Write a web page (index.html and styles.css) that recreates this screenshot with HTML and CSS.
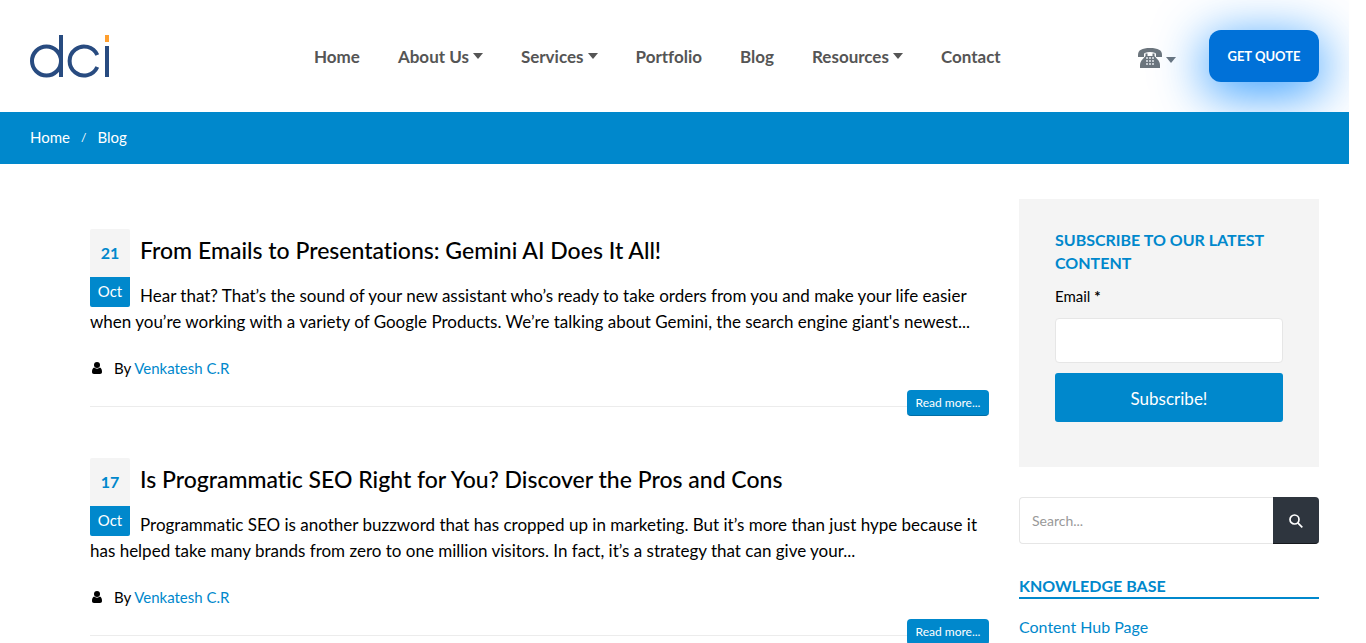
FILE: index.html
```html
<!DOCTYPE html>
<html lang="en">
<head>
<meta charset="utf-8">
<title>Blog</title>
<link rel="stylesheet" href="styles.css">
</head>
<body>
<div class="page">
  <header class="header">
    <a class="logo" href="#" aria-label="dci home">
      <svg width="80" height="44" viewBox="0 0 80 44" fill="none" stroke="#284b80" stroke-width="4">
        <circle cx="16.500" cy="26" r="14.500"/>
        <path d="M31 0v42"/>
        <path d="M67.300 20A14.500 14.500 0 1 0 67.300 32"/>
        <path d="M77 11v31"/>
        <path d="M77 0v7" stroke="#ff9f2e"/>
      </svg>
    </a>
    <nav class="nav">
      <a href="#">Home</a>
      <a href="#">About Us <i class="caret"></i></a>
      <a href="#">Services <i class="caret"></i></a>
      <a href="#">Portfolio</a>
      <a href="#">Blog</a>
      <a href="#">Resources <i class="caret"></i></a>
      <a href="#">Contact</a>
    </nav>
    <div class="actions">
      <button class="phone" aria-label="Phone numbers">
        <svg width="26" height="22" viewBox="0 0 26 22" fill="#6c757d">
          <path d="M1 10V8C1 3 5 1 13 1s12 2 12 7v2h-6V7c0-1-2-2-6-2S7 6 7 7v3z"/>
          <path d="M8.500 6.500h2V9h5V6.500h2V9l4 4.500c1 1.500 1.500 3 1.500 5V21H3v-2.500c0-2 .5-3.500 1.500-5L8.500 9z"/>
          <path d="M9 11h2M12 11h2M15 11h2M9 14h2M12 14h2M15 14h2M9 17h2M12 17h2M15 17h2" stroke="#e4e8ec" stroke-width="1.500"/>
        </svg>
        <i class="caret"></i>
      </button>
      <a class="quote" href="#">GET QUOTE</a>
    </div>
  </header>
  <nav class="crumbs" aria-label="Breadcrumb"><a href="#">Home</a><span class="slash">/</span><span>Blog</span></nav>
  <div class="content">
    <main class="posts">
      <article class="post">
        <div class="date"><span class="day">21</span><span class="month">Oct</span></div>
        <h2><a href="#">From Emails to Presentations: Gemini AI Does It All!</a></h2>
        <p>Hear that? That’s the sound of your new assistant who’s ready to take orders from you and make your life easier when you’re working with a variety of Google Products. We’re talking about Gemini, the search engine giant's newest...</p>
        <div class="meta">
          <svg width="10" height="12" viewBox="0 0 10 12"><circle cx="5" cy="3" r="3"/><path d="M2 5.500C.5 6 0 8 0 10c0 1.200.7 2 2 2h6c1.300 0 2-.8 2-2 0-2-.5-4-2-4.500-1.500 1.500-4.500 1.500-6 0z"/></svg>
          <span>By <a href="#">Venkatesh C.R</a></span>
        </div>
        <div class="more"><a href="#">Read more...</a></div>
      </article>
      <article class="post">
        <div class="date"><span class="day">17</span><span class="month">Oct</span></div>
        <h2><a href="#">Is Programmatic SEO Right for You? Discover the Pros and Cons</a></h2>
        <p>Programmatic SEO is another buzzword that has cropped up in marketing. But it’s more than just hype because it has helped take many brands from zero to one million visitors. In fact, it’s a strategy that can give your...</p>
        <div class="meta">
          <svg width="10" height="12" viewBox="0 0 10 12"><circle cx="5" cy="3" r="3"/><path d="M2 5.500C.5 6 0 8 0 10c0 1.200.7 2 2 2h6c1.300 0 2-.8 2-2 0-2-.5-4-2-4.500-1.500 1.500-4.500 1.500-6 0z"/></svg>
          <span>By <a href="#">Venkatesh C.R</a></span>
        </div>
        <div class="more"><a href="#">Read more...</a></div>
      </article>
    </main>
    <aside class="side">
      <form class="subscribe">
        <h3>SUBSCRIBE TO OUR LATEST CONTENT</h3>
        <label for="email">Email <b>*</b></label>
        <input id="email" type="email">
        <button type="button">Subscribe!</button>
      </form>
      <form class="search">
        <input type="text" placeholder="Search..." aria-label="Search">
        <button type="button" aria-label="Search">
          <svg width="14" height="14" viewBox="0 0 14 14" fill="none" stroke="#fff" stroke-width="1.700"><circle cx="5.500" cy="5.500" r="4.500"/><path d="M8.800 8.800l4.500 4.500"/></svg>
        </button>
      </form>
      <h3 class="side-title">KNOWLEDGE BASE</h3>
      <a class="side-link" href="#">Content Hub Page</a>
    </aside>
  </div>
</div>
</body>
</html>
```
FILE: styles.css
```css
* { box-sizing: border-box; }
body { margin: 0; background: #fff; color: #000; font: 17px/26px Lato, "Open Sans", sans-serif; font-variant-ligatures: none; }
a { color: #0088cc; text-decoration: none; }
h2, h3, p { margin: 0; }
button, input { font-family: inherit; }
.page { margin-right: 17px; height: 100vh; overflow: hidden; }
.header { display: grid; grid-template-columns: 284px 1fr auto; align-items: center; height: 112px; padding: 0 30px; overflow: hidden; }
.logo { display: flex; padding-top: 2px; }
.nav { display: flex; gap: 38px; padding-top: 2px; white-space: nowrap; }
.nav a { color: #555; font-weight: 700; display: flex; align-items: center; gap: 4px; }
.caret { border: 5px solid transparent; border-top: 6px solid currentColor; border-bottom: 0; }
.nav .caret { margin-bottom: 2px; }
.actions { display: flex; align-items: center; gap: 33px; }
.phone { display: flex; align-items: center; gap: 3px; border: 0; background: none; padding: 4px 0 0; color: #6c757d; }
.phone .caret { margin-top: 3px; }
.quote { background: #0071d8; color: #fff; font-size: 13px; font-weight: 700; line-height: 52px; width: 110px; text-align: center; border-radius: 12px; box-shadow: 0 10px 50px 4px #0084ffc0; }
.crumbs { display: flex; background: #0088cc; color: #fff; height: 52px; padding: 0 30px; font-size: 15px; line-height: 51px; }
.crumbs a { color: #fff; }
.slash { padding: 0 11px; font-size: 12px; }
.content { display: grid; grid-template-columns: 1fr 300px; gap: 30px; padding: 35px 30px 0; }
.posts { padding: 30px 0 0 60px; }
.post { margin-bottom: 42px; }
.date { float: left; width: 40px; margin-right: 10px; text-align: center; }
.date span { display: block; }
.day { background: #f4f4f4; color: #0088cc; font-size: 16px; font-weight: 700; line-height: 48px; border-radius: 2px 2px 0 0; }
.month { background: #0088cc; color: #fff; font-size: 15px; line-height: 28px; padding-bottom: 2px; border-radius: 0 0 2px 2px; }
.post h2 { font-size: 23px; font-weight: 500; line-height: 42px; margin-bottom: 12px; }
.post h2 a { color: #000; }
.meta { display: flex; align-items: center; gap: 12px; padding-left: 2px; margin-top: 20px; font-size: 15px; }
.more { display: flex; align-items: flex-end; margin-top: 9px; }
.more::before { content: ""; flex: 1; margin-bottom: 9px; border-top: 1px solid #ececec; }
.more a { width: 82px; background: #0088cc; color: #fff; font-size: 12px; line-height: 25px; text-align: center; border-bottom: 1px solid #006ea6; border-radius: 4px; }
.subscribe { background: #f4f4f4; padding: 29px 36px 45px; margin-bottom: 30px; }
.side h3 { color: #0088cc; font-size: 16px; font-weight: 700; line-height: 23px; }
.subscribe label { display: block; margin: 9px 0; font-size: 15px; }
.subscribe input { display: block; width: 100%; height: 45px; border: 1px solid #e6e6e6; border-radius: 4px; background: #fff; }
.subscribe button { width: 100%; height: 49px; margin-top: 10px; padding-top: 3px; background: #0088cc; color: #fff; border: 0; border-radius: 3px; font-size: 17px; display: block; }
.search { display: flex; height: 47px; margin-bottom: 30px; }
.search input { flex: 1; min-width: 0; border: 1px solid #e6e6e6; border-right: 0; border-radius: 4px 0 0 4px; padding: 0 12px; font-size: 14px; }
.search input::placeholder { color: #999; }
.search button { width: 46px; padding-top: 5px; background: #2e353e; border: 0; border-bottom: 1px solid #16191d; border-radius: 0 4px 4px 0; }
.side .side-title { border-bottom: 2px solid #0088cc; margin-bottom: 15px; }
.side-link { font-size: 16px; }
```
